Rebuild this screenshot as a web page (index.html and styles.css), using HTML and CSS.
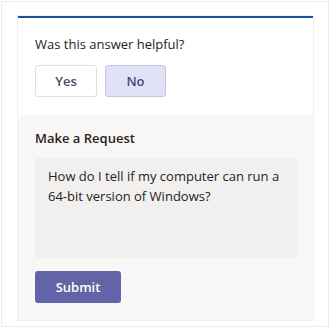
FILE: index.html
```html
<!DOCTYPE html>
<html lang="en">
<head>
    <meta charset="UTF-8">
    <meta name="viewport" content="width=device-width, initial-scale=1.0">
    <title>Was this answer helpful?</title>
    <link rel="stylesheet" href="styles.css">
</head>
<body>
    <div class="frame">
        <div class="card">
            <!-- Feedback -->
            <div class="feedback">
                <div class="question">Was this answer helpful?</div>
                <div class="choices">
                    <button class="choice">Yes</button>
                    <button class="choice selected">No</button>
                </div>
            </div>

            <!-- Request -->
            <div class="request">
                <div class="request-title">Make a Request</div>
                <textarea class="request-box">How do I tell if my computer can run a 64-bit version of Windows?</textarea>
                <button class="submit">Submit</button>
            </div>
        </div>
    </div>
</body>
</html>
```

FILE: styles.css
```css
body {
    margin: 0;
    background: #ffffff;
    font-family: "Open Sans", "Noto Sans", sans-serif;
    color: #252423;
}
.frame {
    margin: 1px;
    width: 328px;
    height: 326px;
    box-sizing: border-box;
    border: 1px solid #ececec;
    padding: 14px 15px 0 16px;
}
.card {
    width: 295px;
    border-top: 2px solid #1b4f9a;
    box-shadow: 0 0 0 1px #f1f0ef;
}
.feedback {
    background: #ffffff;
    padding: 16px 17px 18px;
}
.question {
    font-size: 13px;
    line-height: 20px;
    margin-bottom: 11px;
}
.choices {
    display: flex;
    gap: 8px;
}
.choice {
    width: 62px;
    height: 32px;
    font-family: inherit;
    font-size: 13px;
    font-weight: 600;
    color: #464775;
    background: #ffffff;
    border: 1px solid #e1dfdd;
    border-radius: 3px;
}
.choice.selected {
    width: 61px;
    background: #e2e2f6;
    border-color: #c5c5e6;
}
.request {
    background: #f8f7f5;
    padding: 13px 16px 17px 17px;
}
.request-title {
    font-size: 13px;
    font-weight: 600;
    line-height: 20px;
    margin-bottom: 10px;
}
.request-box {
    display: block;
    width: 262px;
    height: 100px;
    box-sizing: border-box;
    padding: 8px 13px;
    font-family: inherit;
    font-size: 13px;
    line-height: 20px;
    color: #252423;
    background: #f1f0ef;
    border: none;
    border-radius: 2px;
    resize: none;
    margin-bottom: 13px;
}
.submit {
    width: 86px;
    height: 32px;
    font-family: inherit;
    font-size: 13px;
    font-weight: 600;
    color: #ffffff;
    background: #6264a7;
    border: none;
    border-radius: 3px;
}
```
